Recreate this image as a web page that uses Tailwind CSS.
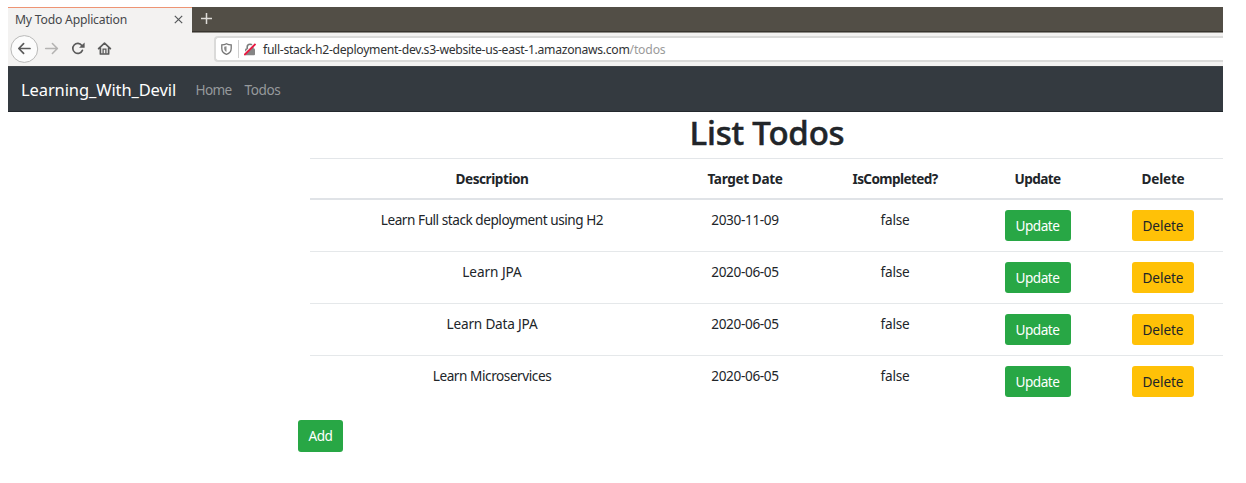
<!DOCTYPE html>
<html lang="en">
<head>
<meta charset="utf-8">
<title>My Todo Application</title>
<script src="https://cdn.jsdelivr.net/npm/@tailwindcss/browser@4"></script>
</head>
<body class="bg-white font-['Noto_Sans',sans-serif] text-[13.6px] text-[#212529] overflow-hidden">
<div class="ml-2 mt-[7px] w-[1215px] h-[476px] overflow-hidden">
  <!-- Tab strip -->
  <div class="flex h-[26px] bg-[#524e46] border-b border-[#8f8d88]">
    <div class="flex w-[184px] h-[26px] shrink-0 items-center justify-between bg-[#f3f2f1] border-t border-[#ee9474] pl-[7px] pr-[9px] text-[12.2px] text-[#45474a]">
      <span class="tracking-[-0.21px] whitespace-nowrap leading-none -mt-px">My Todo Application</span>
      <svg class="size-[9px] -mt-[2px]" viewBox="0 0 9 9" fill="none" stroke="#55585a" stroke-width="1.2"><path d="M.8.8l7.4 7.4M8.2.8L.8 8.2"/></svg>
    </div>
    <div class="flex flex-1 items-center pl-[8px] pb-[2px] border-b border-[#37342e]">
      <svg class="size-[13px]" viewBox="0 0 13 13" fill="none" stroke="#dedcd8" stroke-width="1.5"><path d="M6.5 1v11M1 6.5h11"/></svg>
    </div>
  </div>
  <!-- Toolbar -->
  <div class="flex h-[33px] items-center bg-[#f3f2f1] pl-[2px] pb-px">
    <svg class="w-[104px] h-[30px] shrink-0" viewBox="0 0 104 30" fill="none">
      <circle cx="14.3" cy="15" r="13.4" fill="#fcfcfc" stroke="#b9b9b8"/>
      <path d="M20 14.500H9M13.600 9.700L8.800 14.500l4.800 4.800" stroke="#5a5a5a" stroke-width="1.7" stroke-linecap="round" stroke-linejoin="round"/>
      <path d="M35.700 14.500h11.500M42.400 9.500l5 5-5 5" stroke="#b4b3b2" stroke-width="1.6" stroke-linecap="round" stroke-linejoin="round"/>
      <path d="M71.800 11.400A5 5 0 1 0 72.400 16.400" stroke="#5a5a5a" stroke-width="1.7" stroke-linecap="round"/>
      <path d="M74.600 8.400v5.400h-5.600z" fill="#5a5a5a"/>
      <path d="M88.600 14.600l5.900-5.500 5.900 5.500M90.400 13.800v6.200h8.200v-6.200" stroke="#5a5a5a" stroke-width="1.7" stroke-linecap="round" stroke-linejoin="round"/>
      <path d="M93.100 19.800v-4.600h2.800v4.600" stroke="#5a5a5a" stroke-width="1.3"/>
    </svg>
    <div class="flex h-[26px] w-[1020px] shrink-0 ml-[100px] items-center rounded-[4px] border-2 border-r-0 border-[#dadad9] bg-white pl-[5px] text-[12.2px] leading-none whitespace-nowrap">
      <svg class="w-[11px] h-[12px]" viewBox="0 0 11 12" fill="none"><path d="M5.5.8C4 1.6 2.500 1.900.8 1.900V5.500C.8 8.400 2.600 10.400 5.500 11.300 8.400 10.400 10.200 8.400 10.200 5.500V1.900C8.500 1.900 7 1.600 5.500.8z" stroke="#757575" stroke-width="1.3"/><path d="M5.500 3.200v5.700C3.900 8.100 3.200 7 3.200 5.500V3.800z" fill="#8a8a8a"/></svg>
      <div class="ml-[6px] w-px h-[18px] bg-[#cfcfcf]"></div>
      <svg class="ml-[5px] w-[12px] h-[13px]" viewBox="0 0 12 13" fill="none"><path d="M3.200 6V4a2.800 2.800 0 0 1 5.600 0v2" stroke="#7b7b7b" stroke-width="1.6"/><rect x="1" y="5.600" width="10" height="6.600" rx="1" fill="#858585"/><path d="M.3 11.200L11 .5" stroke="#fff" stroke-width="2.4"/><path d="M.3 12L11.500 1" stroke="#e8173f" stroke-width="1.800"/></svg>
      <span class="ml-[7px] pt-[2px] tracking-[-0.3px] text-[#303234]">full-stack-h2-deployment-dev.s3-website-us-east-1.amazonaws.com</span><span class="pt-[2px] tracking-[-0.17px] text-[#9a9a9a]">/todos</span>
    </div>
  </div>
  <!-- Site navigation -->
  <nav class="flex h-[46px] items-center bg-[#343a40] border-t border-b border-t-[#3f4347] border-b-[#23282d] pl-[13px] pt-[2px] whitespace-nowrap">
    <a class="w-[174.500px] text-[16.500px] tracking-[-0.11px] text-white">Learning_With_Devil</a>
    <a class="w-[49px] tracking-[-0.67px] text-[#96999c]">Home</a>
    <a class="tracking-[-0.39px] text-[#96999c]">Todos</a>
  </nav>
  <!-- Todo list -->
  <main class="ml-[290px] w-[939px]">
    <h1 class="h-[46px] pr-[1px] text-center text-[33px] leading-[41px] font-medium tracking-[-0.19px] [-webkit-text-stroke:0.5px_#212529]">List Todos</h1>
    <table class="ml-[12px] w-[915px] table-fixed border-separate border-spacing-0 text-center [&_td]:border-[#e5e8ea] [&_td]:p-0 [&_td]:align-top [&_td]:h-[52px] [&_td]:pt-[10px] [&_td]:leading-[20px] [&_tr:not(:last-child)>td]:border-b">
      <colgroup><col class="w-[364px]"><col class="w-[142px]"><col class="w-[158px]"><col class="w-[127px]"><col class="w-[124px]"></colgroup>
      <thead>
        <tr class="[&>th]:h-[42px] [&>th]:p-0 [&>th]:pt-[2px] [&>th]:border-t [&>th]:border-b-2 [&>th]:border-t-[#e3e6e9] [&>th]:border-b-[#e0e3e7] [&>th]:font-bold">
          <th class="tracking-[-0.45px]">Description</th><th class="tracking-[-0.37px]">Target Date</th><th class="tracking-[-0.62px]">IsCompleted?</th><th class="tracking-[-0.6px]">Update</th><th class="tracking-[-0.21px]">Delete</th>
        </tr>
      </thead>
      <tbody>
        <tr><td class="tracking-[-0.46px]">Learn Full stack deployment using H2</td><td class="tracking-[-0.35px]">2030-11-09</td><td class="tracking-[-0.2px]">false</td><td><button class="block mx-auto h-[31px] w-[66px] rounded-[3px] bg-[#28a745] text-white tracking-[-0.48px]">Update</button></td><td><button class="block mx-auto h-[31px] w-[62px] rounded-[3px] bg-[#ffc107] tracking-[-0.06px]">Delete</button></td></tr>
        <tr><td class="tracking-[-0.05px]">Learn JPA</td><td class="tracking-[-0.35px]">2020-06-05</td><td class="tracking-[-0.2px]">false</td><td><button class="block mx-auto h-[31px] w-[66px] rounded-[3px] bg-[#28a745] text-white tracking-[-0.48px]">Update</button></td><td><button class="block mx-auto h-[31px] w-[62px] rounded-[3px] bg-[#ffc107] tracking-[-0.06px]">Delete</button></td></tr>
        <tr><td class="tracking-[-0.19px]">Learn Data JPA</td><td class="tracking-[-0.35px]">2020-06-05</td><td class="tracking-[-0.2px]">false</td><td><button class="block mx-auto h-[31px] w-[66px] rounded-[3px] bg-[#28a745] text-white tracking-[-0.48px]">Update</button></td><td><button class="block mx-auto h-[31px] w-[62px] rounded-[3px] bg-[#ffc107] tracking-[-0.06px]">Delete</button></td></tr>
        <tr><td class="tracking-[-0.44px]">Learn Microservices</td><td class="tracking-[-0.35px]">2020-06-05</td><td class="tracking-[-0.2px]">false</td><td><button class="block mx-auto h-[31px] w-[66px] rounded-[3px] bg-[#28a745] text-white tracking-[-0.48px]">Update</button></td><td><button class="block mx-auto h-[31px] w-[62px] rounded-[3px] bg-[#ffc107] tracking-[-0.06px]">Delete</button></td></tr>
      </tbody>
    </table>
    <button class="block mt-[12px] h-[32px] w-[45px] rounded-[3px] bg-[#28a745] text-white tracking-[-0.47px]">Add</button>
  </main>
</div>
</body>
</html>
